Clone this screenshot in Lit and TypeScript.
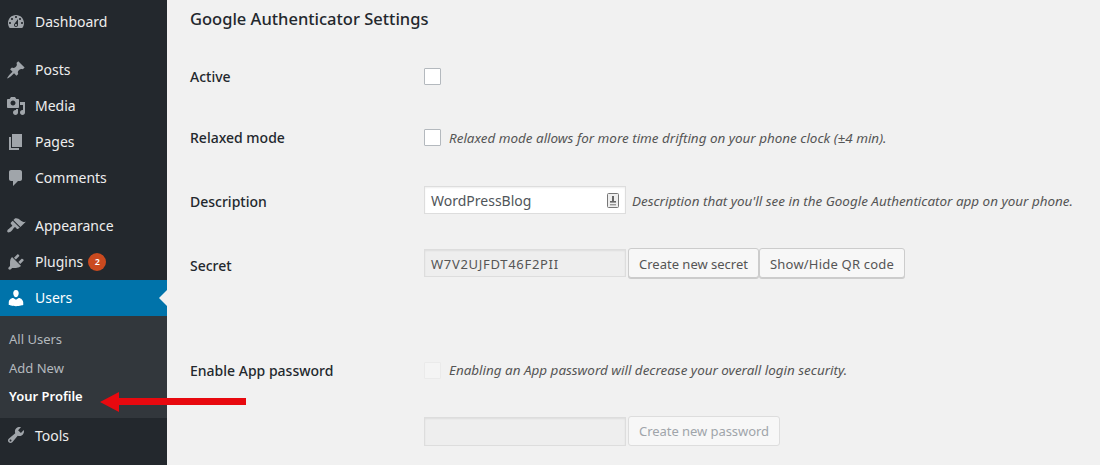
import { LitElement, html, css, svg } from "lit";
import { customElement } from "lit/decorators.js";

const ICONS: Record<string, string> = {
  dashboard: "M3.76 16h12.48c1.1-1.37 1.76-3.11 1.76-5 0-4.42-3.58-8-8-8s-8 3.58-8 8c0 1.89.66 3.63 1.76 5zM10 4c.55 0 1 .45 1 1s-.45 1-1 1-1-.45-1-1 .45-1 1-1zM6 6c.55 0 1 .45 1 1s-.45 1-1 1-1-.45-1-1 .45-1 1-1zm8 0c.55 0 1 .45 1 1s-.45 1-1 1-1-.45-1-1 .45-1 1-1zm-5.37 5.55L12 7v6c0 1.1-.9 2-2 2s-2-.9-2-2c0-.57.24-1.08.63-1.45zM4 10c.55 0 1 .45 1 1s-.45 1-1 1-1-.45-1-1 .45-1 1-1zm12 0c.55 0 1 .45 1 1s-.45 1-1 1-1-.45-1-1 .45-1 1-1zm-5 3c0-.55-.45-1-1-1s-1 .45-1 1 .45 1 1 1 1-.45 1-1z",
  posts: "M10.44 3.02l1.82-1.82 6.36 6.35-1.83 1.82c-1.05-.68-2.48-.57-3.41.36l-.75.75c-.92.93-1.04 2.35-.35 3.41l-1.83 1.82-2.41-2.41-2.8 2.79c-.42.42-3.38 2.71-3.8 2.29s1.86-3.39 2.28-3.81l2.79-2.79L4.1 9.36l1.83-1.82c1.05.69 2.48.57 3.4-.36l.75-.75c.93-.92 1.05-2.35.36-3.41z",
  media: "M13 11V4c0-.55-.45-1-1-1h-1.67L9 1H5L3.67 3H2c-.55 0-1 .45-1 1v7c0 .55.45 1 1 1h10c.55 0 1-.45 1-1zM7 4.5c1.38 0 2.5 1.12 2.5 2.5S8.38 9.5 7 9.5 4.5 8.38 4.5 7 5.62 4.5 7 4.5zM14 6h5v10.5c0 1.38-1.12 2.5-2.5 2.5S14 17.88 14 16.5s1.12-2.5 2.5-2.5c.17 0 .34.02.5.05V9h-3V6zm-4 8.05V13h2v3.5c0 1.38-1.12 2.5-2.5 2.5S7 17.88 7 16.5 8.12 14 9.5 14c.17 0 .34.02.5.05z",
  pages: "M6 15V2h10v13H6zm-1 1h8v2H3V5h2v11z",
  comments: "M5 2h9c1.1 0 2 .9 2 2v7c0 1.1-.9 2-2 2h-2l-5 5v-5H5c-1.1 0-2-.9-2-2V4c0-1.1.9-2 2-2z",
  appearance: "M14.48 11.06L7.41 3.99l1.5-1.5c.5-.56 2.3-.47 3.51.32 1.21.8 1.43 1.28 2.91 2.1 1.18.64 2.45 1.26 4.45.85zm-.71.71L6.7 4.7 4.93 6.47c-.39.39-.39 1.02 0 1.41l1.06 1.06c.39.39.39 1.03 0 1.42-.6.6-1.43 1.11-2.21 1.69-.35.26-.7.53-1.01.84C1.43 13.23.78 15.37 1.5 16.1c.73.73 2.87.07 4.22-1.27.31-.31.58-.66.84-1.01.58-.78 1.09-1.61 1.69-2.21.39-.39 1.03-.39 1.42 0l1.06 1.06c.39.39 1.02.39 1.41 0z",
  plugins: "M13.11 4.36L9.87 7.6 8 5.73l3.24-3.24c.35-.34 1.05-.2 1.56.32.52.51.66 1.21.31 1.55zm-8 1.77l.91-1.12 9.01 9.01-1.19.84c-.71.71-2.63 1.16-3.82 1.16H6.14L4.9 17.26c-.59.59-1.54.59-2.12 0-.59-.58-.59-1.53 0-2.12l1.24-1.24v-3.88c0-1.13.4-3.19 1.09-3.89zm7.26 3.97l3.24-3.24c.34-.35 1.04-.21 1.55.31.52.51.66 1.21.31 1.55l-3.24 3.25z",
  users: "M10 9.25c-2.27 0-2.73-3.44-2.73-3.44C7 4.02 7.82 2 9.97 2c2.16 0 2.98 2.02 2.71 3.81 0 0-.41 3.44-2.68 3.44zm0 2.57L12.72 10c2.39 0 4.52 2.33 4.52 4.53v2.49s-3.65 1.13-7.24 1.13c-3.65 0-7.24-1.13-7.24-1.13v-2.49c0-2.25 1.94-4.48 4.47-4.48z",
  tools: "M16.68 9.77c-1.34 1.34-3.3 1.67-4.95.99l-5.41 6.52c-.99.99-2.59.99-3.58 0s-.99-2.59 0-3.57l6.52-5.42c-.68-1.65-.35-3.61.99-4.95 1.28-1.28 3.12-1.62 4.72-1.06l-2.89 2.89 2.82 2.82 2.86-2.87c.53 1.58.18 3.39-1.08 4.67zM3.81 16.21c.4.39 1.04.39 1.43 0 .4-.4.4-1.04 0-1.43-.39-.4-1.03-.4-1.43 0-.39.39-.39 1.03 0 1.43z",
};

@customElement("app-root")
export class AppRoot extends LitElement {
  static styles = css`
    :host { display: block; width: 1100px; height: 465px; overflow: hidden; position: relative;
      font-family: "Noto Sans", sans-serif; background: #f1f1f1; color: #444; }
    .page { display: flex; height: 465px; }
    .side { width: 167px; flex: none; background: #23282d; padding-top: 4px; box-sizing: border-box; }
    .item { display: flex; align-items: center; height: 36px; box-sizing: border-box; padding-bottom: 1px; color: #eee; font-size: 14px; }
    .gap { margin-top: 12px; }
    .ico { width: 20px; height: 20px; margin: 0 9px 0 6px; flex: none; fill: #a0a5aa; }
    .item.cur { background: #0073aa; color: #fff; position: relative; }
    .item.cur .ico { fill: #fff; }
    .item.cur::after { content: ""; position: absolute; right: 0; top: 10px; border: 8px solid transparent;
      border-right-color: #f1f1f1; border-left-width: 0; }
    .badge { margin-left: 5px; width: 18px; height: 18px; border-radius: 50%; background: #ca4a1f; color: #fff;
      font-size: 9px; font-weight: 600; display: flex; align-items: center; justify-content: center; }
    .sub { background: #32373c; padding: 9px 0 7px; }
    .sub div { height: 28.6px; display: flex; align-items: center; padding-left: 9px; font-size: 13px; color: #b4b9be; }
    .sub .on { color: #fff; font-weight: 600; }
    .main { flex: 1; padding-left: 23px; }
    h2 { margin: 0; height: 39px; line-height: 38px; font-size: 16.5px; font-weight: 500; color: #23282d; }
    .row { display: flex; align-items: center; }
    .lab { width: 234px; flex: none; font-size: 14px; font-weight: 500; color: #23282d; }
    .r1 { height: 75px; }
    .r2 { height: 47px; }
    .r3 { height: 80px; }
    .r4 { height: 48px; }
    .r5 { height: 58px; margin-top: 52px; }
    .r6 { height: 64px; }
    .check { width: 17px; height: 17px; box-sizing: border-box; flex: none; border: 1px solid #b4b9be; background: #fff; border-radius: 1px; margin-right: 8px; }
    .check.off { background: #f4f4f4; border-color: #eaeaea; }
    .desc { font-size: 13.45px; font-style: italic; color: #555; white-space: nowrap; }
    .input { width: 202px; height: 28px; box-sizing: border-box; flex: none; border: 1px solid #ddd; background: #fff;
      display: flex; align-items: center; justify-content: space-between; padding: 0 6px; font-size: 14px; color: #50555a;
      box-shadow: inset 0 1px 2px rgba(0,0,0,.07); }
    .r3 .input { margin-bottom: 2px; }
    .r4 .input { margin-bottom: 4px; height: 28px; padding-top: 2px; }
    .r4 .btn { margin-bottom: 4px; padding-top: 1px; }
    .r6 .input { height: 29px; }
    .input.ro { background: #eeeeee; color: #555; font-size: 13px; letter-spacing: .7px; }
    .input + .desc { margin-left: 6px; }
    .input + .btn { margin-left: 2px; }
    .btn { height: 30px; box-sizing: border-box; border: 1px solid #ccc; border-radius: 3px; background: #f7f7f7;
      box-shadow: 0 1px 0 #ccc; color: #555; font-size: 13px; display: flex; align-items: center; padding: 0 10px; white-space: nowrap; }
    .btn.wide { letter-spacing: .2px; }
    .btn.off { color: #a0a5aa; border-color: #ddd; box-shadow: none; letter-spacing: -.05px; }
    .lp { width: 12px; height: 15px; flex: none; }
    .arrow { position: absolute; left: 98px; top: 390px; width: 150px; height: 24px; }
  `;

  private icon(name: string) {
    return html`<svg class="ico" viewBox="0 0 20 20">${svg`<path d=${ICONS[name]}></path>`}</svg>`;
  }

  render() {
    return html`
      <div class="page">
        <nav class="side">
          <div class="item">${this.icon("dashboard")}Dashboard</div>
          <div class="item gap">${this.icon("posts")}Posts</div>
          <div class="item">${this.icon("media")}Media</div>
          <div class="item">${this.icon("pages")}Pages</div>
          <div class="item">${this.icon("comments")}Comments</div>
          <div class="item gap">${this.icon("appearance")}Appearance</div>
          <div class="item">${this.icon("plugins")}Plugins<span class="badge">2</span></div>
          <div class="item cur">${this.icon("users")}Users</div>
          <div class="sub">
            <div>All Users</div>
            <div>Add New</div>
            <div class="on">Your Profile</div>
          </div>
          <div class="item">${this.icon("tools")}Tools</div>
        </nav>
        <main class="main">
          <h2>Google Authenticator Settings</h2>
          <div class="row r1"><div class="lab">Active</div><div class="check"></div></div>
          <div class="row r2"><div class="lab">Relaxed mode</div><div class="check"></div>
            <div class="desc">Relaxed mode allows for more time drifting on your phone clock (±4 min).</div></div>
          <div class="row r3"><div class="lab">Description</div>
            <div class="input">WordPressBlog
              <svg class="lp" viewBox="0 0 12 15"><rect x=".5" y=".5" width="11" height="14" rx="1" fill="#eee" stroke="#777"></rect><rect x="5" y="3" width="2" height="5" fill="#666"></rect><rect x="3" y="8" width="6" height="1.6" fill="#666"></rect><rect x="3" y="11" width="6" height="1.4" fill="#999"></rect></svg>
            </div>
            <div class="desc">Description that you'll see in the Google Authenticator app on your phone.</div></div>
          <div class="row r4"><div class="lab">Secret</div>
            <div class="input ro">W7V2UJFDT46F2PII</div>
            <div class="btn">Create new secret</div>
            <div class="btn wide">Show/Hide QR code</div></div>
          <div class="row r5"><div class="lab">Enable App password</div><div class="check off"></div>
            <div class="desc">Enabling an App password will decrease your overall login security.</div></div>
          <div class="row r6"><div class="lab"></div>
            <div class="input ro"></div>
            <div class="btn off">Create new password</div></div>
        </main>
      </div>
      <svg class="arrow" viewBox="0 0 150 24"><path d="M2 12 L21 2 L21 8 L148 8 L148 15 L21 15 L21 22 Z" fill="#e8090f"></path></svg>
    `;
  }
}
